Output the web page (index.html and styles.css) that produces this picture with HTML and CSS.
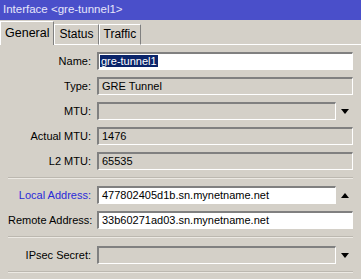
FILE: index.html
```html
<!DOCTYPE html>
<html lang="en">
<head>
  <meta charset="UTF-8" />
  <title>Interface &lt;gre-tunnel1&gt;</title>
  <link rel="stylesheet" href="styles.css">
</head>
<body>

  <!-- Window title -->
  <div class="titlebar">Interface &lt;gre-tunnel1&gt;</div>

  <!-- Tabs -->
  <div class="tabs">
    <div class="tab active">General</div>
    <div class="tab">Status</div>
    <div class="tab">Traffic</div>
    <div class="tab-fill"></div>
  </div>

  <!-- Form -->
  <div class="panel">
    <div class="row">
      <label>Name:</label>
      <div class="field edit"><span class="selected">gre-tunnel1</span></div>
    </div>
    <div class="row">
      <label>Type:</label>
      <div class="field">GRE Tunnel</div>
    </div>
    <div class="row">
      <label>MTU:</label>
      <div class="field"></div>
      <span class="arrow down"></span>
    </div>
    <div class="row">
      <label>Actual MTU:</label>
      <div class="field">1476</div>
    </div>
    <div class="row">
      <label>L2 MTU:</label>
      <div class="field">65535</div>
    </div>

    <div class="sep sep-a"></div>

    <div class="row">
      <label class="link">Local Address:</label>
      <div class="field edit">477802405d1b.sn.mynetname.net</div>
      <span class="arrow up"></span>
    </div>
    <div class="row">
      <label>Remote Address:</label>
      <div class="field edit">33b60271ad03.sn.mynetname.net</div>
    </div>

    <div class="sep sep-b"></div>

    <div class="row">
      <label>IPsec Secret:</label>
      <div class="field"></div>
      <span class="arrow down"></span>
    </div>

    <div class="sep sep-c"></div>
  </div>

</body>
</html>
```

FILE: styles.css
```css
/* Reset */
* {
  margin: 0;
  padding: 0;
  box-sizing: border-box;
}
body, html {
  font-family: 'Liberation Sans', Arial, sans-serif;
  font-size: 11px;
  background: #d4d0c8;
  color: #000;
  width: 361px;
  height: 279px;
  overflow: hidden;
}

/* Title bar */
.titlebar {
  height: 20px;
  line-height: 19px;
  padding-left: 3px;
  background: #4a4fca;
  color: #e6e6fa;
  font-size: 11.5px;
}

/* Tabs */
.tabs {
  display: flex;
  align-items: flex-end;
  height: 25px;
}
.tab {
  height: 21px;
  line-height: 19px;
  padding: 0 4px;
  border-top: 1px solid #fff;
  border-left: 1px solid #fff;
  border-right: 1px solid #808080;
  border-bottom: 1px solid #fff;
  font-size: 12px;
}
.tab.active {
  height: 24px;
  line-height: 22px;
  padding: 0 4px;
  border-bottom: none;
  font-size: 12.5px;
}
.tab-fill {
  flex: 1;
  border-bottom: 1px solid #fff;
}

/* Form panel */
.panel {
  padding: 7px 8px 0 8px;
}
.row {
  display: flex;
  align-items: center;
  height: 18px;
  margin-bottom: 7px;
}
.row label {
  width: 83px;
  text-align: right;
  margin-right: 6px;
  white-space: nowrap;
  direction: rtl;
  unicode-bidi: plaintext;
}
.row label.link {
  color: #2a2ad8;
}
.field {
  flex: 1;
  height: 18px;
  line-height: 15px;
  padding-left: 3px;
  border-top: 2px solid #808080;
  border-left: 2px solid #808080;
  border-right: 1px solid #fff;
  border-bottom: 1px solid #fff;
  white-space: nowrap;
  overflow: hidden;
}
.field.edit {
  background: #fff;
}
.selected {
  background: #0a246a;
  color: #fff;
  padding: 0 1px;
  margin-left: -2px;
}

/* Dropdown arrows */
.arrow {
  width: 17px;
  display: flex;
  justify-content: flex-end;
  padding-right: 4px;
}
.arrow::after {
  content: "";
  border-left: 4px solid transparent;
  border-right: 4px solid transparent;
}
.arrow.down::after {
  border-top: 5px solid #000;
}
.arrow.up::after {
  border-bottom: 5px solid #000;
}

/* Separators */
.sep {
  height: 2px;
  border-top: 1px solid #bcb8b0;
  border-bottom: 1px solid #ece9e3;
}
.sep-a { margin: 2px 0 7px; }
.sep-b { margin: 1px 0 8px; }
.sep-c { margin: 2px 0 0; }
```
